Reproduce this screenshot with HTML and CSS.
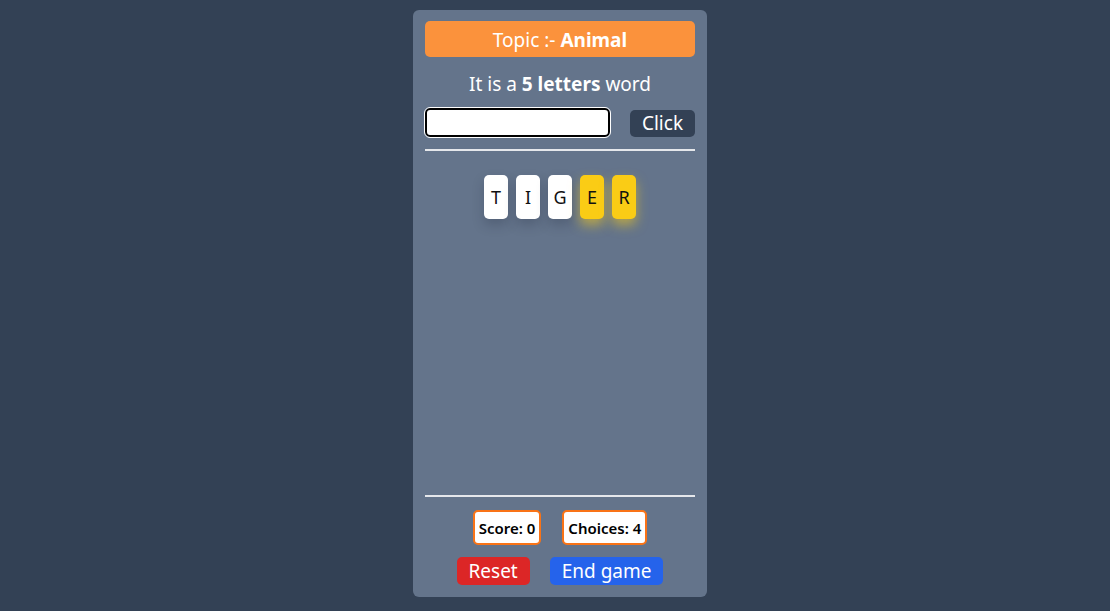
FILE: index.html
```html
<!DOCTYPE html>
<html>
<head>
<meta charset="utf-8">
<link rel="stylesheet" href="styles.css">
</head>
<body>
<div class="card">
  <div class="topic">Topic :- <b>Animal</b></div>
  <div class="hint">It is a <b>5 letters</b> word</div>
  <div class="entry">
    <input class="field" type="text">
    <button class="click">Click</button>
  </div>
  <hr class="rule">
  <div class="board">
    <div class="row">
      <span class="tile">T</span>
      <span class="tile">I</span>
      <span class="tile">G</span>
      <span class="tile hit">E</span>
      <span class="tile hit">R</span>
    </div>
  </div>
  <hr class="rule">
  <div class="stats">
    <span class="stat">Score: 0</span>
    <span class="stat">Choices: 4</span>
  </div>
  <div class="actions">
    <button class="btn reset">Reset</button>
    <button class="btn end">End game</button>
  </div>
</div>
</body>
</html>
```
FILE: styles.css
```css
html, body {
  margin: 0;
  height: 100%;
}
body {
  background: #334155;
  font-family: "Noto Sans", "Open Sans", sans-serif;
  display: flex;
  justify-content: center;
  align-items: flex-start;
  padding: 10px 0 0 10px;
  box-sizing: border-box;
}
.card {
  width: 294px;
  height: 587px;
  box-sizing: border-box;
  background: #64748b;
  border-radius: 6px;
  padding: 11px 12px 12px;
  display: flex;
  flex-direction: column;
}
.topic {
  background: #fb923c;
  color: #fff;
  border-radius: 5px;
  height: 36px;
  line-height: 38px;
  text-align: center;
  font-size: 19px;
}
.hint {
  color: #fff;
  text-align: center;
  font-size: 19px;
  margin-top: 13px;
  line-height: 28px;
}
.entry {
  display: flex;
  justify-content: space-between;
  align-items: flex-end;
  margin-top: 10px;
}
.field {
  width: 185px;
  height: 29px;
  box-sizing: border-box;
  border: 2px solid #000;
  border-radius: 5px;
  background: #fff;
  outline: 1px solid #fff;
  margin: 0;
}
.click {
  background: #334155;
  color: #fff;
  border: 0;
  border-radius: 5px;
  font-family: inherit;
  font-size: 19px;
  height: 27px;
  width: 65px;
  padding: 0;
  line-height: 27px;
}
.rule {
  border: 0;
  height: 2px;
  background: #e5e7eb;
  margin: 12px 0 0;
}
.board {
  flex: 1;
  padding-top: 24px;
}
.row {
  display: flex;
  justify-content: center;
  gap: 8px;
}
.tile {
  width: 24px;
  height: 44px;
  border-radius: 5px;
  background: #fff;
  color: #111;
  font-size: 18px;
  font-weight: 400;
  display: flex;
  align-items: center;
  justify-content: center;
  box-shadow: 0 6px 12px rgba(30, 41, 59, 0.25);
}
.tile.hit {
  background: #facc15;
  box-shadow: 0 6px 12px rgba(250, 204, 21, 0.55);
}
.stats {
  display: flex;
  justify-content: center;
  gap: 21px;
  margin-top: 13px;
}
.stat {
  background: #fff;
  border: 2px solid #f97316;
  border-radius: 5px;
  height: 35px;
  box-sizing: border-box;
  padding: 0 4px;
  display: flex;
  align-items: center;
  font-size: 15px;
  font-weight: 600;
  color: #000;
}
.actions {
  display: flex;
  justify-content: center;
  gap: 20px;
  margin-top: 12px;
}
.btn {
  border: 0;
  border-radius: 5px;
  color: #fff;
  font-family: inherit;
  font-size: 19px;
  height: 28px;
  line-height: 28px;
  padding: 0 12px;
}
.reset { background: #dc2626; }
.end { background: #2563eb; }
```
